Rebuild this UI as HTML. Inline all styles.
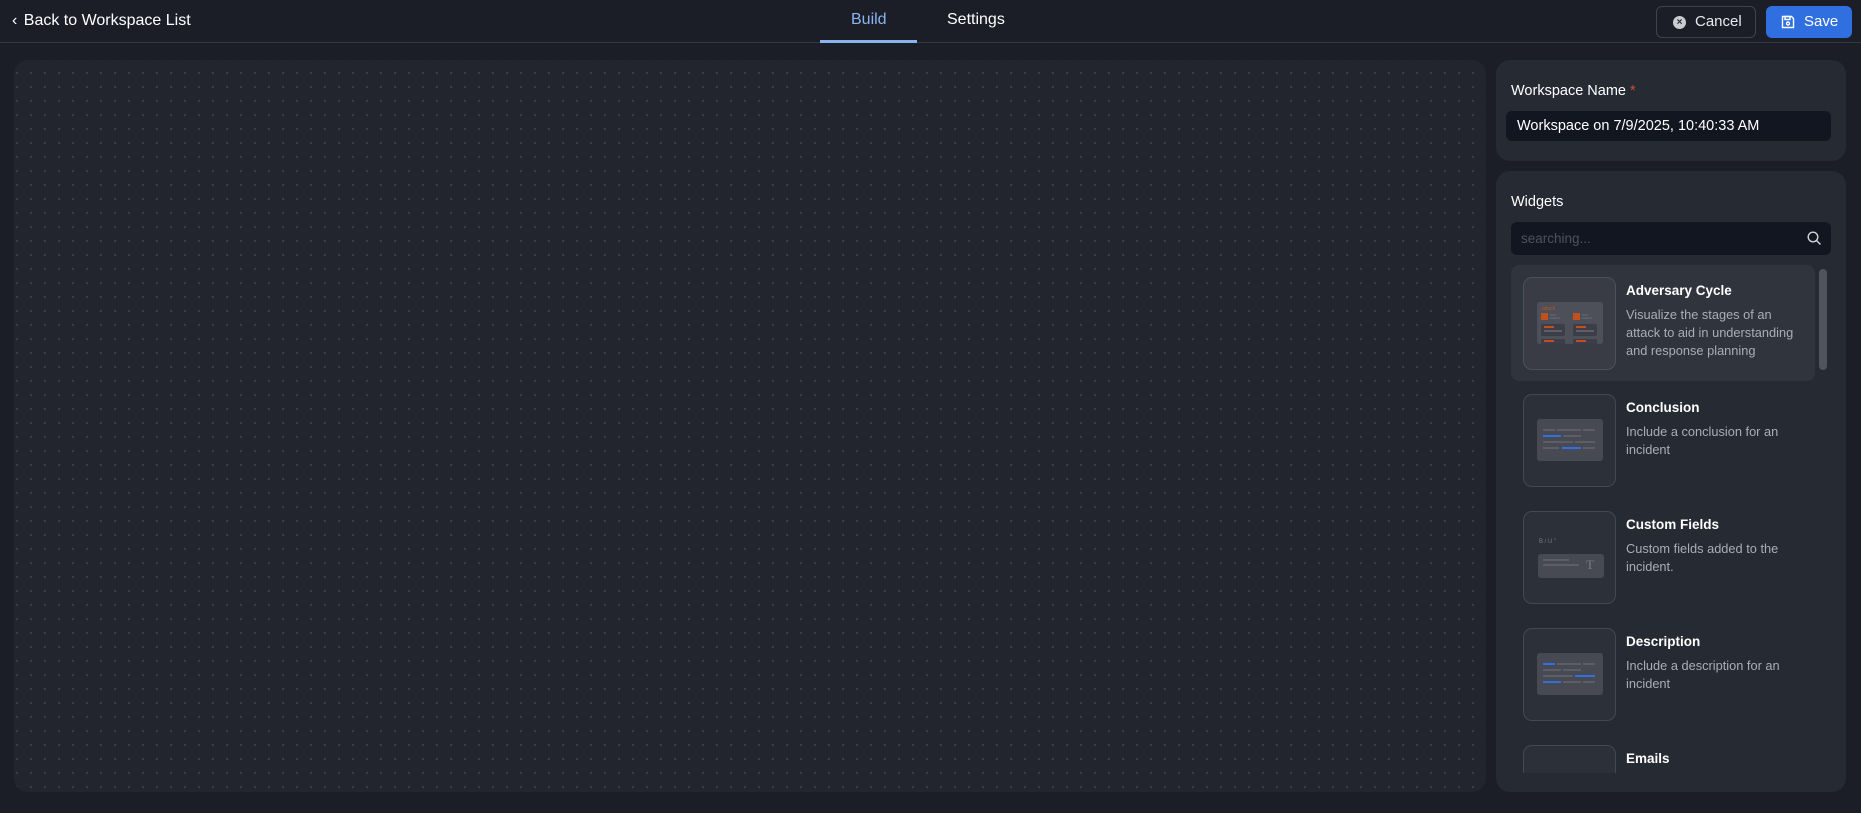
<!DOCTYPE html>
<html><head><meta charset="utf-8"><style>
*{box-sizing:border-box;margin:0;padding:0}
body{width:1861px;height:813px;background:#1b1e27;font-family:"Liberation Sans",sans-serif;color:#e8eaee;position:relative;overflow:hidden}
.abs{position:absolute}
.hdr{left:0;top:0;width:1861px;height:43px;border-bottom:1px solid #353944}
.canvas{left:14px;top:60px;width:1472px;height:732px;border-radius:14px;background-color:#22252e;background-image:radial-gradient(circle,#3b3f49 1px,transparent 1.3px);background-size:14px 14px;background-position:24px 20px}
.panel{background:#262a33;border-radius:14px}
.card{left:1511px;width:304px;height:116px;border-radius:8px}
.thumb{width:93px;height:93px;border:1px solid #444853;border-radius:9px;background:#2c3039;position:absolute;left:12px;top:12px}
.title{position:absolute;left:115px;top:18px;font-weight:bold;font-size:13.5px;color:#fff}
.desc{position:absolute;left:115px;top:41px;font-size:12.8px;line-height:18px;color:#a9adb6;width:168px}
.inner{position:absolute;left:13px;top:24px;width:66px;height:42px;background:#474a52;border-radius:3px;overflow:hidden}
.ln{position:absolute;height:2px;background:#5b5e66}
.bl{background:#2f6fdf}
</style></head><body>
<div class="abs hdr"></div>
<div class="abs" style="left:12px;top:12px;font-size:16px;color:#fff">&#8249; <span style="margin-left:2px">Back to Workspace List</span></div>
<div class="abs" style="left:851px;top:11px;font-size:16px;color:#8ab4f0">Build</div>
<div class="abs" style="left:820px;top:40px;width:97px;height:3px;background:#8ab4f0"></div>
<div class="abs" style="left:947px;top:11px;font-size:16px;color:#fff">Settings</div>
<div class="abs" style="left:1656px;top:6px;width:100px;height:32px;border:1px solid #3e424c;border-radius:6px;font-size:15px;line-height:30px;padding-left:38px;color:#e8eaee">Cancel
<div class="abs" style="left:16px;top:9px;width:13px;height:13px;border-radius:50%;background:#c9ccd2;color:#262a33;font-size:10px;line-height:13px;text-align:center;font-weight:bold">×</div></div>
<div class="abs" style="left:1766px;top:6px;width:86px;height:32px;background:#2f6fdf;border-radius:6px;font-size:15px;line-height:32px;padding-left:38px;color:#fff">Save
<svg class="abs" style="left:15px;top:9px" width="14" height="14" viewBox="0 0 14 14" fill="none" stroke="#fff" stroke-width="1.4"><path d="M1.5 1.5h9l2 2v9h-11z"/><rect x="4" y="1.5" width="5" height="3"/><circle cx="7" cy="8.5" r="1.5"/></svg></div>

<div class="abs canvas"></div>

<div class="abs panel" style="left:1496px;top:60px;width:350px;height:101px"></div>
<div class="abs" style="left:1511px;top:83px;font-size:14.5px;color:#fff">Workspace Name <span style="color:#d9463a">*</span></div>
<div class="abs" style="left:1506px;top:111px;width:325px;height:30px;background:#121620;border-radius:6px;font-size:14.5px;line-height:30px;padding-left:11px;color:#fff">Workspace on 7/9/2025, 10:40:33 AM</div>

<div class="abs panel" style="left:1496px;top:171px;width:350px;height:621px;overflow:hidden"></div>
<div class="abs" style="left:1511px;top:194px;font-size:14.5px;color:#fff">Widgets</div>
<div class="abs" style="left:1511px;top:222px;width:320px;height:33px;background:#121620;border-radius:6px;font-size:13.5px;line-height:33px;padding-left:10px;color:#4e525c">searching...
<svg class="abs" style="left:296px;top:9px" width="15" height="15" viewBox="0 0 15 15" fill="none" stroke="#d0d3d9" stroke-width="1.4"><circle cx="6" cy="6" r="4.8"/><path d="M9.5 9.5l4 4"/></svg></div>

<div class="abs" style="left:1511px;top:265px;width:322px;height:508px;overflow:hidden">
 <div class="abs" style="left:308px;top:4px;width:8px;height:101px;border-radius:4px;background:#50545e"></div>
 <div class="abs card" style="left:0;top:0;background:#30343d">
  <div class="thumb" style="background:#393c44;border-color:#4c505a"><div class="inner" style="background:#4d5058">
   <div class="abs" style="left:5px;top:4px;font-size:5px;color:#c2501f">attack</div>
   <div class="abs" style="left:4px;top:11px;width:7px;height:7px;background:#c2501f"></div>
   <div class="ln" style="left:13px;top:12px;width:6px"></div><div class="ln" style="left:13px;top:15px;width:10px"></div>
   <div class="abs" style="left:36px;top:11px;width:7px;height:7px;background:#c2501f"></div>
   <div class="ln" style="left:45px;top:12px;width:6px"></div><div class="ln" style="left:45px;top:15px;width:10px"></div>
   <div class="abs" style="left:4px;top:22px;width:24px;height:12px;background:#3b3e46;border-radius:2px"></div>
   <div class="abs" style="left:36px;top:22px;width:24px;height:12px;background:#3b3e46;border-radius:2px"></div>
   <div class="ln" style="left:7px;top:24px;width:10px;background:#c2501f"></div><div class="ln" style="left:39px;top:24px;width:10px;background:#c2501f"></div>
   <div class="ln" style="left:7px;top:28px;width:18px"></div><div class="ln" style="left:39px;top:28px;width:18px"></div>
   <div class="abs" style="left:4px;top:37px;width:24px;height:5px;background:#3b3e46"></div><div class="abs" style="left:36px;top:37px;width:24px;height:5px;background:#3b3e46"></div>
   <div class="ln" style="left:7px;top:38px;width:10px;background:#c2501f"></div><div class="ln" style="left:39px;top:38px;width:10px;background:#c2501f"></div>
  </div></div>
  <div class="title">Adversary Cycle</div>
  <div class="desc">Visualize the stages of an attack to aid in understanding and response planning</div>
 </div>
 <div class="abs card" style="left:0;top:117px">
  <div class="thumb"><div class="inner">
   <div class="ln" style="left:6px;top:10px;width:12px"></div><div class="ln" style="left:20px;top:10px;width:24px"></div><div class="ln" style="left:46px;top:10px;width:12px"></div>
   <div class="ln bl" style="left:6px;top:16px;width:18px"></div><div class="ln" style="left:26px;top:16px;width:18px"></div>
   <div class="ln" style="left:6px;top:22px;width:30px"></div><div class="ln" style="left:38px;top:22px;width:20px"></div>
   <div class="ln" style="left:6px;top:28px;width:16px"></div><div class="ln bl" style="left:25px;top:28px;width:19px"></div><div class="ln" style="left:46px;top:28px;width:12px"></div>
  </div></div>
  <div class="title">Conclusion</div>
  <div class="desc">Include a conclusion for an incident</div>
 </div>
 <div class="abs card" style="left:0;top:234px">
  <div class="thumb">
   <div class="abs" style="left:15px;top:27px;font-size:6px;color:#777b84">B / U "</div>
   <div class="abs" style="left:14px;top:42px;width:66px;height:24px;background:#474a52;border-radius:3px">
    <div class="ln" style="left:5px;top:5px;width:26px"></div><div class="ln" style="left:5px;top:10px;width:36px"></div>
    <div class="abs" style="left:48px;top:3px;font-size:13px;color:#777b84;font-family:'Liberation Serif',serif">T</div>
   </div>
  </div>
  <div class="title">Custom Fields</div>
  <div class="desc">Custom fields added to the incident.</div>
 </div>
 <div class="abs card" style="left:0;top:351px">
  <div class="thumb"><div class="inner">
   <div class="ln bl" style="left:6px;top:10px;width:12px"></div><div class="ln" style="left:20px;top:10px;width:24px"></div><div class="ln" style="left:46px;top:10px;width:12px"></div>
   <div class="ln" style="left:6px;top:16px;width:18px"></div><div class="ln" style="left:26px;top:16px;width:18px"></div>
   <div class="ln" style="left:6px;top:22px;width:30px"></div><div class="ln bl" style="left:38px;top:22px;width:20px"></div>
   <div class="ln bl" style="left:6px;top:28px;width:18px"></div><div class="ln" style="left:26px;top:28px;width:18px"></div><div class="ln" style="left:46px;top:28px;width:12px"></div>
  </div></div>
  <div class="title">Description</div>
  <div class="desc">Include a description for an incident</div>
 </div>
 <div class="abs card" style="left:0;top:468px">
  <div class="thumb"></div>
  <div class="title">Emails</div>
 </div>
</div>
</body></html>
